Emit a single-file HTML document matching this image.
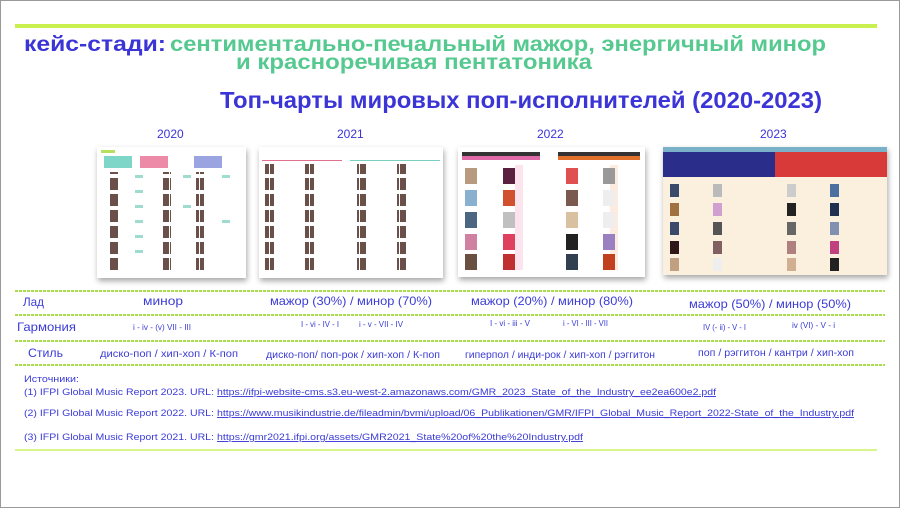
<!DOCTYPE html>
<html><head><meta charset="utf-8"><style>
html,body{margin:0;padding:0;background:#fff}
svg{display:block}
text{font-family:"Liberation Sans",sans-serif}
</style></head><body>
<svg width="900" height="508" viewBox="0 0 900 508" xmlns="http://www.w3.org/2000/svg">
<defs>
<filter id="sh" x="-10%" y="-10%" width="130%" height="130%"><feDropShadow dx="1" dy="3" stdDeviation="3" flood-color="#000" flood-opacity="0.35"/></filter>
<pattern id="rows1" width="10" height="16" patternUnits="userSpaceOnUse"><rect x="0" y="2" width="9" height="12" fill="#6a5048"/></pattern>
</defs>
<rect x="0.5" y="0.5" width="899" height="507" fill="#fff" stroke="#9a9a9a"/>
<rect x="15" y="24" width="862" height="4" fill="#c9f04f"/>
<text x="24" y="51" font-size="21" font-weight="bold" fill="#3b34d6" textLength="142" lengthAdjust="spacingAndGlyphs">кейс-стади:</text>
<text x="170" y="51" font-size="21" font-weight="bold" fill="#55c98f" textLength="656" lengthAdjust="spacingAndGlyphs">сентиментально-печальный мажор, энергичный минор</text>
<text x="236" y="69" font-size="21" font-weight="bold" fill="#55c98f" textLength="356" lengthAdjust="spacingAndGlyphs">и красноречивая пентатоника</text>
<text x="220" y="108" font-size="23" font-weight="bold" fill="#3b34d6" textLength="602" lengthAdjust="spacingAndGlyphs">Топ-чарты мировых поп-исполнителей (2020-2023)</text>
<g font-size="12" fill="#3b34d6">
<text x="157" y="138">2020</text><text x="337" y="138">2021</text><text x="537" y="138">2022</text><text x="760" y="138">2023</text>
</g>
<!-- 2020 -->
<g filter="url(#sh)"><rect x="97" y="147" width="149" height="131" fill="#fff"/></g>
<rect x="101" y="150" width="14" height="3" fill="#b8e060"/>
<rect x="104" y="156" width="28" height="12" fill="#7ed6c8"/><rect x="140" y="156" width="28" height="12" fill="#ec8aa8"/><rect x="194" y="156" width="28" height="12" fill="#9aa4e0"/>
<g fill="#5a4a44"><rect x="110" y="172" width="8" height="100" fill="url(#rows1)"/><rect x="163" y="172" width="8" height="100" fill="url(#rows1)"/><rect x="196" y="172" width="8" height="100" fill="url(#rows1)"/></g>
<g fill="#9fdcd0"><rect x="135" y="175" width="8" height="3"/><rect x="135" y="190" width="8" height="3"/><rect x="135" y="205" width="8" height="3"/><rect x="135" y="220" width="8" height="3"/><rect x="135" y="235" width="8" height="3"/><rect x="135" y="250" width="8" height="3"/><rect x="183" y="175" width="8" height="3"/><rect x="183" y="205" width="8" height="3"/><rect x="222" y="175" width="8" height="3"/><rect x="222" y="220" width="8" height="3"/></g>
<!-- 2021 -->
<g filter="url(#sh)"><rect x="259" y="147" width="184" height="131" fill="#fff"/></g>
<rect x="262" y="160" width="80" height="1" fill="#e0708e"/><rect x="350" y="160" width="90" height="1" fill="#7ad0c0"/>
<g fill="url(#rows1)"><rect x="265" y="164" width="9" height="110"/><rect x="305" y="164" width="9" height="110"/><rect x="357" y="164" width="9" height="110"/><rect x="397" y="164" width="9" height="110"/></g>
<!-- 2022 -->
<g filter="url(#sh)"><rect x="458" y="147" width="187" height="130" fill="#fff"/></g>
<rect x="462" y="152" width="78" height="4" fill="#333"/><rect x="462" y="156" width="78" height="4" fill="#e06aa8"/>
<rect x="558" y="152" width="82" height="4" fill="#333"/><rect x="558" y="156" width="82" height="4" fill="#e0702a"/>
<rect x="515" y="165" width="8" height="105" fill="#fbe4ee"/><rect x="610" y="165" width="8" height="105" fill="#fdebe0"/>
<g fill="#b89a80"><rect x="465" y="168" width="12" height="16"/><rect x="465" y="190" width="12" height="16" fill="#8ab0d0"/><rect x="465" y="212" width="12" height="16" fill="#4a6680"/><rect x="465" y="234" width="12" height="16" fill="#d080a0"/><rect x="465" y="254" width="12" height="16" fill="#6a5040"/>
<rect x="503" y="168" width="12" height="16" fill="#5a2040"/><rect x="503" y="190" width="12" height="16" fill="#d05030"/><rect x="503" y="212" width="12" height="16" fill="#c0c0c0"/><rect x="503" y="234" width="12" height="16" fill="#e04060"/><rect x="503" y="254" width="12" height="16" fill="#c03030"/>
<rect x="566" y="168" width="12" height="16" fill="#e05050"/><rect x="566" y="190" width="12" height="16" fill="#7a5a50"/><rect x="566" y="212" width="12" height="16" fill="#d8c0a0"/><rect x="566" y="234" width="12" height="16" fill="#222"/><rect x="566" y="254" width="12" height="16" fill="#304050"/>
<rect x="603" y="168" width="12" height="16" fill="#999"/><rect x="603" y="190" width="12" height="16" fill="#eee"/><rect x="603" y="212" width="12" height="16" fill="#eee"/><rect x="603" y="234" width="12" height="16" fill="#9a80c0"/><rect x="603" y="254" width="12" height="16" fill="#c04020"/></g>
<!-- 2023 -->
<g filter="url(#sh)"><rect x="663" y="147" width="224" height="128" fill="#fbefdd"/></g>
<rect x="663" y="147" width="224" height="5" fill="#7ab0c8"/>
<rect x="663" y="152" width="112" height="25" fill="#2a2e8a"/><rect x="775" y="152" width="112" height="25" fill="#d83a3a"/>
<g fill="#3a4a6a"><rect x="670" y="184" width="9" height="13"/><rect x="670" y="203" width="9" height="13" fill="#a07040"/><rect x="670" y="222" width="9" height="13"/><rect x="670" y="241" width="9" height="13" fill="#301818"/><rect x="670" y="258" width="9" height="13" fill="#c0a080"/>
<rect x="713" y="184" width="9" height="13" fill="#bbb"/><rect x="713" y="203" width="9" height="13" fill="#d0a0d0"/><rect x="713" y="222" width="9" height="13" fill="#555"/><rect x="713" y="241" width="9" height="13" fill="#806060"/><rect x="713" y="258" width="9" height="13" fill="#eee"/>
<rect x="787" y="184" width="9" height="13" fill="#ccc"/><rect x="787" y="203" width="9" height="13" fill="#222"/><rect x="787" y="222" width="9" height="13" fill="#666"/><rect x="787" y="241" width="9" height="13" fill="#b08080"/><rect x="787" y="258" width="9" height="13" fill="#d0b090"/>
<rect x="830" y="184" width="9" height="13" fill="#4a70a0"/><rect x="830" y="203" width="9" height="13" fill="#203050"/><rect x="830" y="222" width="9" height="13" fill="#8090b0"/><rect x="830" y="241" width="9" height="13" fill="#c04080"/><rect x="830" y="258" width="9" height="13" fill="#222"/></g>
<!-- table lines -->
<g stroke="#a8dc4a" stroke-width="2" stroke-dasharray="3 1"><line x1="15" y1="291" x2="885" y2="291"/><line x1="15" y1="315" x2="885" y2="315"/><line x1="15" y1="341" x2="885" y2="341"/><line x1="15" y1="365" x2="885" y2="365"/></g>
<g fill="#3b3bd8" font-size="12">
<text x="23" y="306" textLength="21" lengthAdjust="spacingAndGlyphs">Лад</text>
<text x="143" y="305" textLength="40" lengthAdjust="spacingAndGlyphs">минор</text>
<text x="270" y="305" textLength="162" lengthAdjust="spacingAndGlyphs">мажор (30%) / минор (70%)</text>
<text x="471" y="305" textLength="162" lengthAdjust="spacingAndGlyphs">мажор (20%) / минор (80%)</text>
<text x="689" y="308" textLength="162" lengthAdjust="spacingAndGlyphs">мажор (50%) / минор (50%)</text>
<text x="17" y="331" textLength="59" lengthAdjust="spacingAndGlyphs">Гармония</text>
<text x="28" y="357" textLength="35" lengthAdjust="spacingAndGlyphs">Стиль</text>
</g>
<g fill="#3b3bd8" font-size="8">
<text x="133" y="330" textLength="58" lengthAdjust="spacingAndGlyphs">i - iv - (v) VII - III</text>
<text x="301" y="327" textLength="38" lengthAdjust="spacingAndGlyphs">I - vi - IV - I</text>
<text x="359" y="327" textLength="44" lengthAdjust="spacingAndGlyphs">i - v - VII - IV</text>
<text x="490" y="326" textLength="40" lengthAdjust="spacingAndGlyphs">I - vi - iii - V</text>
<text x="563" y="326" textLength="45" lengthAdjust="spacingAndGlyphs">i - VI - III - VII</text>
<text x="703" y="330" textLength="43" lengthAdjust="spacingAndGlyphs">IV (- ii) - V - I</text>
<text x="792" y="328" textLength="43" lengthAdjust="spacingAndGlyphs">iv (VI) - V - i</text>
</g>
<g fill="#3b3bd8" font-size="10">
<text x="100" y="357" textLength="138" lengthAdjust="spacingAndGlyphs">диско-поп / хип-хоп / К-поп</text>
<text x="266" y="358" textLength="174" lengthAdjust="spacingAndGlyphs">диско-поп/ поп-рок / хип-хоп / К-поп</text>
<text x="465" y="358" textLength="190" lengthAdjust="spacingAndGlyphs">гиперпол / инди-рок / хип-хоп / рэггитон</text>
<text x="698" y="356" textLength="156" lengthAdjust="spacingAndGlyphs">поп / рэггитон / кантри / хип-хоп</text>
</g>
<g fill="#3b3bd8" font-size="9.5">
<text x="24" y="382" textLength="55" lengthAdjust="spacingAndGlyphs">Источники:</text>
<text x="24" y="395" textLength="190" lengthAdjust="spacingAndGlyphs">(1) IFPI Global Music Report 2023. URL:</text>
<text x="217" y="395" text-decoration="underline" textLength="499" lengthAdjust="spacingAndGlyphs">https://ifpi-website-cms.s3.eu-west-2.amazonaws.com/GMR_2023_State_of_the_Industry_ee2ea600e2.pdf</text>
<text x="24" y="416" textLength="190" lengthAdjust="spacingAndGlyphs">(2) IFPI Global Music Report 2022. URL:</text>
<text x="217" y="416" text-decoration="underline" textLength="637" lengthAdjust="spacingAndGlyphs">https://www.musikindustrie.de/fileadmin/bvmi/upload/06_Publikationen/GMR/IFPI_Global_Music_Report_2022-State_of_the_Industry.pdf</text>
<text x="24" y="440" textLength="190" lengthAdjust="spacingAndGlyphs">(3) IFPI Global Music Report 2021. URL:</text>
<text x="217" y="440" text-decoration="underline" textLength="366" lengthAdjust="spacingAndGlyphs">https://gmr2021.ifpi.org/assets/GMR2021_State%20of%20the%20Industry.pdf</text>
</g>
<rect x="15" y="449" width="862" height="2" fill="#d8f58a"/>
</svg>
</body></html>
